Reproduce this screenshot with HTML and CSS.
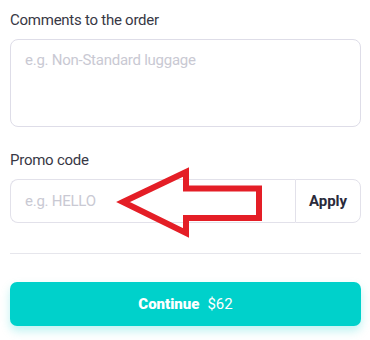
FILE: index.html
```html
<!DOCTYPE html>
<html>
<head>
<meta charset="utf-8">
<link rel="stylesheet" href="styles.css">
</head>
<body>
<div class="form">
  <label class="label">Comments to the order</label>
  <div class="textarea"><span class="ph">e.g. Non-Standard luggage</span></div>
  <label class="label label-promo">Promo code</label>
  <div class="promo">
    <div class="promo-input"><span class="ph">e.g. HELLO</span></div>
    <div class="apply">Apply</div>
  </div>
  <hr class="divider">
  <div class="continue"><b>Continue</b><span class="price">$62</span></div>
</div>
<svg class="arrow" width="370" height="340" viewBox="0 0 370 340">
  <polygon points="123,202 186,172 186,188.5 259,188.5 259,218 186,218 186,233" fill="none" stroke="#e41e26" stroke-width="6" stroke-linejoin="miter" stroke-miterlimit="10"/>
</svg>
</body>
</html>
```
FILE: styles.css
```css
html, body {
  margin: 0;
  padding: 0;
  background: #fff;
}
body {
  font-family: Roboto, "Noto Sans", sans-serif;
  width: 370px;
  height: 340px;
  overflow: hidden;
  position: relative;
}
.form {
  padding: 10px 9px 0 10px;
  display: flex;
  flex-direction: column;
}
.label {
  font-size: 15px;
  line-height: 20px;
  color: #383845;
  height: 20px;
  letter-spacing: -0.25px;
}
.textarea {
  margin-top: 9px;
  border: 1px solid #dedde8;
  border-radius: 8px;
  padding: 10px 14px;
  box-sizing: border-box;
  height: 88px;
}
.ph {
  font-size: 15px;
  line-height: 20px;
  color: #c9c9d3;
  letter-spacing: -0.25px;
}
.label-promo {
  margin-top: 23px;
}
.promo {
  margin-top: 9px;
  display: flex;
  height: 44px;
}
.promo-input {
  flex: 1;
  border: 1px solid #e2e1ea;
  border-right: none;
  border-radius: 8px 0 0 8px;
  display: flex;
  align-items: center;
  padding-left: 14px;
}
.apply {
  width: 66px;
  border: 1px solid #e2e1ea;
  border-radius: 0 8px 8px 0;
  display: flex;
  align-items: center;
  justify-content: center;
  font-weight: 700;
  font-size: 15px;
  color: #2a2a3a;
  box-sizing: border-box;
}
.divider {
  margin: 30px 0 0 0;
  border: none;
  border-top: 1px solid #e6e6ec;
  height: 0;
}
.continue {
  margin-top: 28px;
  height: 44px;
  border-radius: 7px;
  background: #00d1cb;
  color: #fff;
  display: flex;
  align-items: center;
  justify-content: center;
  font-size: 15px;
  box-shadow: 0 5px 10px rgba(0, 209, 203, 0.25);
}
.continue b {
  font-weight: 900;
}
.price {
  margin-left: 8px;
}
.arrow {
  position: absolute;
  left: 0;
  top: 0;
  pointer-events: none;
}
```
